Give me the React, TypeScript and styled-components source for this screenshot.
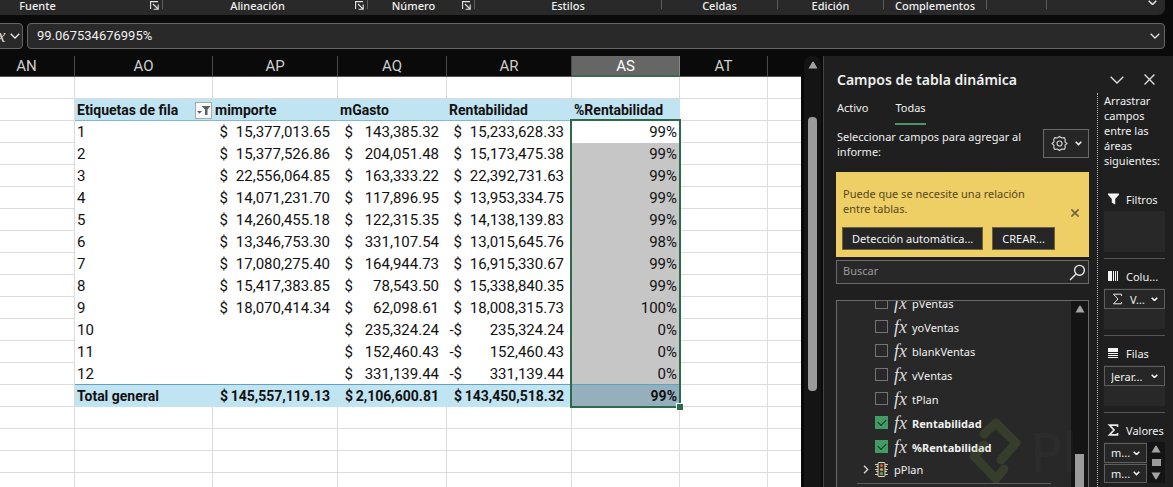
import React from 'react';
import styled, { createGlobalStyle, css } from 'styled-components';

const UI = '"Noto Sans", "Open Sans", sans-serif';
const SHEET = 'Roboto, "Liberation Sans", sans-serif';

const Global = createGlobalStyle`
  * { box-sizing: border-box; }
  body {
    margin: 0;
    background: #0a0a0a;
    color: #f0f0f0;
    font: 11px/15px ${UI};
    overflow: hidden;
  }
  button, input, select { font: inherit; color: inherit; margin: 0; }
  svg { display: block; flex: none; }
`;

const Window = styled.div`
  display: flex;
  flex-direction: column;
  height: 100vh;
`;

/* Ribbon */
const Ribbon = styled.header`
  display: flex;
  height: 15px;
  margin-right: 8px;
  padding-right: 8px;
  background: #292929;
  border-radius: 0 0 7px 0;
  overflow: hidden;
`;
const Group = styled.section<{ $width: number; $clipped?: boolean }>`
  display: flex;
  flex: none;
  width: ${p => p.$width}px;
  height: 9px;
  margin-left: ${p => (p.$clipped ? -72 : 0)}px;
  border-right: 1px solid #5c5c5c;
`;
const GroupName = styled.span`
  flex: 1;
  line-height: 11px;
  text-align: center;
  font-weight: 500;
`;
const IconButton = styled.button`
  display: flex;
  align-items: center;
  justify-content: center;
  padding: 0;
  border: 0;
  background: none;
  color: #e0e0e0;
`;
const Launcher = styled(IconButton)`
  width: 15px;
  height: 10px;
`;
const RibbonToggle = styled(IconButton)`
  margin-left: auto;
  height: 5px;
`;

/* Formula bar */
const FormulaBar = styled.div`
  display: flex;
  gap: 4px;
  margin: 8px 8px 7px 0;
`;
const FxButton = styled.button`
  display: flex;
  align-items: center;
  justify-content: flex-end;
  gap: 3px;
  width: 37px;
  height: 26px;
  margin-left: -14px;
  padding: 0 2px 0 0;
  border: 1px solid #666;
  border-radius: 4px;
  background: #292929;
`;
const FormulaBox = styled.div`
  display: flex;
  flex: 1;
  align-items: center;
  height: 26px;
  padding-right: 4px;
  border: 1px solid #666;
  border-radius: 4px;
  background: #292929;
`;
const FormulaInput = styled.input`
  flex: 1;
  min-width: 0;
  padding: 0 0 0 9px;
  border: 0;
  outline: 0;
  background: none;
  font: 13px/22px ${SHEET};
`;
const Fx = styled.i`
  width: 16px;
  font: italic 18px/20px "Liberation Serif", serif;
  color: #dcdcdc;
`;

/* Work area */
const Work = styled.main`
  display: flex;
  flex: 1;
  min-height: 0;
`;
const Sheet = styled.div`
  flex: 1;
  min-width: 0;
  overflow: hidden;
`;
const Grid = styled.table`
  width: 100%;
  table-layout: fixed;
  border-collapse: separate;
  border-spacing: 0;
  font: 15px/20px ${SHEET};
  color: #111;
  background: #fff;
`;
const Col = styled.col<{ $width?: number }>`
  width: ${p => (p.$width ? p.$width + 'px' : 'auto')};
`;
const Letter = styled.th<{ $active?: boolean }>`
  height: 21px;
  padding: ${p => (p.$active ? '1px 0 0' : '0')};
  font-weight: 400;
  font-size: 15px;
  line-height: 18px;
  color: ${p => (p.$active ? '#fff' : '#cfcfcf')};
  background: ${p => (p.$active ? '#666' : '#0a0a0a')};
  border-right: 1px solid ${p => (p.$active ? '#888' : '#4a4a4a')};
  border-bottom: ${p => (p.$active ? '2px solid #3d6b50' : '1px solid #555')};
  &:first-child { padding-right: 21px; }
  &:last-child { border-right: 0; }
`;
type Tone = 'plain' | 'head' | 'body' | 'total';
const Cell = styled.td<{ $tone?: Tone; $picked?: boolean; $align?: string }>`
  position: relative;
  height: 22px;
  padding: 1px 2px 0;
  white-space: nowrap;
  text-align: ${p => p.$align || 'left'};
  border-right: 1px solid #dcdcdc;
  border-bottom: 1px solid #dcdcdc;
  &:last-child { border-right: 0; }
  ${p => p.$tone === 'body' && css`
    border-color: ${p.$picked ? '#c6c6c6' : '#fff'};
    background: ${p.$picked ? '#c6c6c6' : '#fff'};
  `}
  ${p => p.$tone === 'head' && css`
    border-right-color: #c1e4f2;
    border-bottom-color: #7dbad3;
    background: #c1e4f2;
    font-size: 14px;
    font-weight: 700;
  `}
  ${p => p.$tone === 'total' && css`
    border-color: ${p.$picked ? '#95afbc' : '#c1e4f2'};
    background: ${p.$picked ? '#95afbc' : '#c1e4f2'};
    box-shadow: 0 -1px 0 #5fa3bf;
    font-size: 14px;
    font-weight: 700;
  `}
`;
const Money = styled.span`
  display: flex;
  justify-content: space-between;
  margin: 0 5px 0 -2px;
`;
const Sign = styled.span`
  width: 15px;
  text-align: right;
`;
const HeadRow = styled.span`
  display: flex;
  align-items: center;
  justify-content: space-between;
`;
const FilterButton = styled.button`
  display: flex;
  align-items: center;
  justify-content: center;
  width: 17px;
  height: 17px;
  margin-right: -2px;
  padding: 0;
  border: 1px solid #a3a9ad;
  background: #fafafa;
`;
const Selection = styled.span`
  position: absolute;
  z-index: 2;
  top: -2px;
  left: -2px;
  right: -2px;
  height: 289px;
  border: 2px solid #2c6b49;
  pointer-events: none;
  &::after {
    content: '';
    position: absolute;
    right: -4px;
    bottom: -4px;
    width: 6px;
    height: 6px;
    background: #2c6b49;
    border: solid #fff;
    border-width: 1px 0 0 1px;
  }
`;
const SheetScroll = styled.div`
  display: flex;
  flex-direction: column;
  align-items: center;
  width: 17px;
  margin: 0 2px 0 3px;
  padding-top: 5px;
  border-radius: 8px 8px 0 0;
  background: #141414;
`;
const Thumb = styled.div<{ $height: number; $gap: number }>`
  width: 9px;
  height: ${p => p.$height}px;
  margin-top: ${p => p.$gap}px;
  border-radius: 4px;
  background: #9b9b9b;
`;

/* Field pane */
const Pane = styled.aside`
  position: relative;
  display: flex;
  flex-direction: column;
  flex: none;
  width: 350px;
  padding: 0 8px 0 12px;
  overflow: hidden;
  border-left: 1px solid #444;
  background: #1f1f1f;
`;
const PaneHeader = styled.div`
  display: flex;
  align-items: center;
  height: 37px;
  padding: 10px 10px 0 1px;
  gap: 20px;
`;
const PaneTitle = styled.h2`
  flex: 1;
  margin: 0;
  font-size: 14px;
  line-height: 20px;
  font-weight: 600;
`;
const PaneBody = styled.div`
  display: flex;
  flex: 1;
  min-height: 0;
`;
const Fields = styled.div`
  display: flex;
  flex: 1;
  flex-direction: column;
  min-width: 0;
  margin-right: 8px;
`;
const Tabs = styled.div`
  display: flex;
  gap: 27px;
  height: 33px;
  padding-left: 1px;
`;
const Tab = styled.button<{ $active?: boolean }>`
  height: 32px;
  padding: 0 0 1px;
  border: 0;
  border-bottom: 2px solid ${p => (p.$active ? '#4c9469' : 'transparent')};
  background: none;
  line-height: 15px;
`;
const Choose = styled.div`
  display: flex;
  align-items: flex-start;
  justify-content: space-between;
  height: 46px;
  padding-left: 1px;
`;
const Hint = styled.p`
  margin: 3px 0 0;
`;
const GearButton = styled.button`
  display: flex;
  align-items: center;
  justify-content: center;
  gap: 7px;
  width: 46px;
  height: 29px;
  margin-top: 3px;
  padding: 0;
  border: 1px solid #6a6a6a;
  background: #262626;
`;
const Notice = styled.div`
  display: grid;
  grid-template-columns: 1fr 16px;
  align-items: end;
  align-content: end;
  height: 85px;
  padding: 0 6px 7px;
  background: #edcf66;
  color: #57481c;
`;
const NoticeText = styled.p`
  margin: 0 0 11px 1px;
  max-width: 200px;
`;
const NoticeClose = styled(IconButton)`
  height: 12px;
  margin-bottom: 8px;
  color: #6f6240;
`;
const NoticeActions = styled.div`
  display: flex;
  grid-column: 1 / 3;
  gap: 9px;
`;
const NoticeButton = styled.button`
  height: 23px;
  padding: 0 9px;
  border: 1px solid #6b6040;
  background: #262626;
  color: #f4f4f4;
`;
const Search = styled.label`
  display: flex;
  align-items: center;
  height: 24px;
  margin-top: 3px;
  padding-right: 2px;
  border: 1px solid #6a6a6a;
  background: #282828;
`;
const SearchInput = styled.input`
  flex: 1;
  min-width: 0;
  padding: 0 0 3px 6px;
  border: 0;
  outline: 0;
  background: none;
  &::placeholder { color: #9a9a9a; opacity: 1; }
`;
const FieldBox = styled.div`
  display: flex;
  flex: 1;
  min-height: 0;
  margin-top: 16px;
  border: 1px solid #6a6a6a;
  border-bottom: 0;
  background: #282828;
  overflow: hidden;
`;
const FieldList = styled.ul`
  flex: 1;
  margin: -10px 0 0;
  padding: 0 20px 0 0;
  list-style: none;
`;
const FieldItem = styled.li``;
const FieldLabel = styled.label<{ $bold?: boolean }>`
  display: flex;
  align-items: center;
  height: 24px;
  padding-left: 38px;
  font-weight: ${p => (p.$bold ? 700 : 400)};
`;
const Check = styled.input`
  appearance: none;
  position: relative;
  width: 13px;
  height: 13px;
  margin: 0 6px 1px 0;
  border: 1px solid #757575;
  &:checked { background: #429a64; border-color: #429a64; }
  &:checked::after {
    content: '';
    position: absolute;
    left: 2px;
    top: 2px;
    width: 7px;
    height: 4px;
    border: solid #14301f;
    border-width: 0 0 1px 1px;
    transform: rotate(-45deg);
  }
`;
const FieldName = styled.span`
  margin-left: 2px;
`;
const TableRow = styled.li`
  display: flex;
  align-items: center;
  gap: 6px;
  height: 25px;
  margin-left: 20px;
  padding: 0 0 4px 6px;
  border-bottom: 1px solid #5e5e5e;
`;
const FieldScroll = styled.div`
  display: flex;
  flex-direction: column;
  align-items: center;
  width: 17px;
  padding-top: 4px;
  background: #141414;
`;
const FieldThumb = styled.div`
  flex: 1;
  width: 9px;
  margin-top: 141px;
  background: #9b9b9b;
`;

/* Areas */
const Areas = styled.div`
  flex: none;
  width: 68px;
  padding-left: 6px;
  border-left: 1px dotted #b5b5b5;
`;
const AreasHint = styled.p`
  height: 89px;
  margin: 0;
`;
const Area = styled.section`
  height: 77px;
  border-bottom: 1px solid #555;
  &:last-child { border-bottom: 0; }
`;
const AreaHead = styled.h3`
  display: flex;
  align-items: center;
  gap: 6px;
  height: 29px;
  margin: 0;
  padding: 5px 0 0 3px;
  font-size: 11px;
  font-weight: 400;
  white-space: nowrap;
`;
const AreaDrop = styled.div`
  display: flex;
  width: 61px;
  height: 41px;
  background: #282828;
`;
const Chips = styled.div`
  display: flex;
  flex: 1;
  flex-direction: column;
  gap: 1px;
  margin-top: 1px;
`;
const Chip = styled.label`
  display: flex;
  align-items: center;
  justify-content: space-between;
  height: 20px;
  padding: 0 6px;
  border: 1px solid #5e5e5e;
  background: #262626;
`;
const ChipSelect = styled.select`
  appearance: none;
  min-width: 0;
  padding: 0;
  border: 0;
  outline: 0;
  background: none;
`;
const AreaScroll = styled.div`
  display: flex;
  flex-direction: column;
  align-items: center;
  justify-content: space-around;
  width: 18px;
  background: #141414;
`;
const AreaThumb = styled.div`
  width: 9px;
  height: 7px;
  background: #9b9b9b;
`;

const Watermark = styled.div`
  position: absolute;
  left: 144px;
  bottom: 0;
  display: flex;
  align-items: center;
  gap: 8px;
  color: rgba(255, 255, 255, 0.02);
  font: 500 54px/72px ${UI};
  pointer-events: none;
`;

const Chevron = ({ w = 10, s = 1.3 }: { w?: number; s?: number }) => (
  <svg width={w} height={w / 2 + 1} viewBox={`0 0 ${w} ${w / 2 + 1}`} fill="none" stroke="currentColor" strokeWidth={s}>
    <path d={`M.7 .7L${w / 2} ${w / 2}L${w - 0.7} .7`} />
  </svg>
);
const Cross = ({ w = 10, s = 1.2 }: { w?: number; s?: number }) => (
  <svg width={w} height={w} viewBox="0 0 10 10" fill="none" stroke="currentColor" strokeWidth={s}>
    <path d="M.5 .5L9.5 9.5M9.5 .5L.5 9.5" />
  </svg>
);
const Triangle = ({ down }: { down?: boolean }) => (
  <svg width="10" height="8" viewBox="0 0 10 8" fill="#a3a3a3">
    <path d={down ? 'M.5 .5h9L5.6 7.3h-1.2z' : 'M.5 7.5h9L5.6 .7h-1.2z'} />
  </svg>
);
const LauncherIcon = () => (
  <svg width="9" height="9" viewBox="0 0 9 9" fill="none" stroke="#e4e4e4" strokeWidth="1.1">
    <path d="M.6 8V.6H8M3 3l5 5M8.2 3.6v4.7H3.6" />
  </svg>
);
const Gear = () => (
  <svg width="17" height="17" viewBox="0 0 17 17" fill="none" stroke="#cfcfcf" strokeWidth="1.2" strokeLinejoin="round">
    <path d="M1 8.500L3 6.900L2.800 4.300L3.800 2.600L6.300 3L8.500 1.400L10.700 3L13.200 2.600L14.200 4.300L14 6.900L16 8.500L14 10.100L14.200 12.700L13.200 14.400L10.700 14L8.500 15.600L6.300 14L3.800 14.400L2.800 12.700L3 10.100Z" />
    <circle cx="8.500" cy="8.500" r="2.500" />
  </svg>
);
const Magnifier = () => (
  <svg width="17" height="17" viewBox="0 0 17 17" fill="none" stroke="#e8e8e8" strokeWidth="1.4">
    <circle cx="10.500" cy="6.300" r="4.900" />
    <path d="M7 10L1 16" />
  </svg>
);
const Funnel = () => (
  <svg width="13" height="12" viewBox="0 0 13 12" fill="#f4f4f4">
    <path d="M1 .5h11v1.300L8.200 6v5.500L4.800 9.800V6L1 1.800z" />
  </svg>
);
const ColumnsIcon = () => (
  <svg width="13" height="10" viewBox="0 0 13 10" fill="#f4f4f4">
    <path d="M1 0h4v10H1zM6 0h1v10H6zM8 0h1v10H8zM10 0h1v10h-1z" />
  </svg>
);
const RowsIcon = () => (
  <svg width="13" height="10" viewBox="0 0 13 10" fill="#f4f4f4">
    <path d="M1 0h10v4H1zM1 5h10v1H1zM1 7h10v1H1zM1 9h10v1H1z" />
  </svg>
);
const Sigma = ({ thin }: { thin?: boolean }) => (
  <svg width="13" height="12" viewBox="0 0 13 12" fill="none" stroke="#e8e8e8" strokeWidth={thin ? 1 : 1.7}>
    <path d="M10.500 3V1.200H2.500L7 6L2.500 10.800H10.500V9" />
  </svg>
);
const SheetFilterIcon = () => (
  <svg width="14" height="13" viewBox="0 0 14 13" fill="#5a5f63">
    <path d="M4.500 2h9L10.500 5.600V11H8V5.600zM0 7h5L2.500 9.800z" />
  </svg>
);
const TrafficLight = () => (
  <svg width="13" height="15" viewBox="0 0 13 15" fill="none">
    <path d="M0 2.500h13M0 7.500h13M0 12.500h13M1 4.500h11M1 9.500h11" stroke="#d9cfa9" />
    <rect x="3" y=".5" width="7" height="14" rx="1" fill="#34332c" stroke="#e4dcbc" />
    <circle cx="6.500" cy="3.500" r="1.500" fill="#d9543f" />
    <circle cx="6.500" cy="7.500" r="1.500" fill="#d0a25a" />
    <circle cx="6.500" cy="11.500" r="1.500" fill="#5cae7c" />
  </svg>
);
const Expander = () => (
  <svg width="6" height="9" viewBox="0 0 6 9" fill="none" stroke="#d8d8d8" strokeWidth="1.300">
    <path d="M1 .8l3.700 3.700L1 8.200" />
  </svg>
);

const groups = [
  { name: 'Fuente', width: 235, launcher: true },
  { name: 'Alineación', width: 205, launcher: true },
  { name: 'Número', width: 107, launcher: true },
  { name: 'Estilos', width: 187 },
  { name: 'Celdas', width: 116 },
  { name: 'Edición', width: 106 },
  { name: 'Complementos', width: 103 },
  { name: '', width: 60 },
];
const letters = ['AN', 'AO', 'AP', 'AQ', 'AR', 'AS', 'AT', ''];
const widths = [75, 138, 125, 109, 125, 108, 88];
const rows: string[][] = [
  ['1', '15,377,013.65', '143,385.32', '15,233,628.33', '99%'],
  ['2', '15,377,526.86', '204,051.48', '15,173,475.38', '99%'],
  ['3', '22,556,064.85', '163,333.22', '22,392,731.63', '99%'],
  ['4', '14,071,231.70', '117,896.95', '13,953,334.75', '99%'],
  ['5', '14,260,455.18', '122,315.35', '14,138,139.83', '99%'],
  ['6', '13,346,753.30', '331,107.54', '13,015,645.76', '98%'],
  ['7', '17,080,275.40', '164,944.73', '16,915,330.67', '99%'],
  ['8', '15,417,383.85', '78,543.50', '15,338,840.35', '99%'],
  ['9', '18,070,414.34', '62,098.61', '18,008,315.73', '100%'],
  ['10', '', '235,324.24', '-235,324.24', '0%'],
  ['11', '', '152,460.43', '-152,460.43', '0%'],
  ['12', '', '331,139.44', '-331,139.44', '0%'],
];
const total = ['Total general', '145,557,119.13', '2,106,600.81', '143,450,518.32', '99%'];
const fields = ['pVentas', 'yoVentas', 'blankVentas', 'vVentas', 'tPlan', 'Rentabilidad', '%Rentabilidad'];
const checkedFields = ['Rentabilidad', '%Rentabilidad'];

const Amount = ({ value }: { value: string }) =>
  value ? (
    <Money>
      <Sign>{value.startsWith('-') ? '-$' : '$'}</Sign>
      <span>{value.replace('-', '')}</span>
    </Money>
  ) : null;

const DataRow = ({ row, tone, first }: { row: string[]; tone: Tone; first?: boolean }) => (
  <tr>
    <Cell />
    <Cell $tone={tone}>{row[0]}</Cell>
    {row.slice(1, 4).map((v, i) => (
      <Cell key={i} $tone={tone}><Amount value={v} /></Cell>
    ))}
    <Cell $tone={tone} $picked={!first} $align="right">
      {row[4]}
      {first && <Selection />}
    </Cell>
    <Cell />
    <Cell />
  </tr>
);
const BlankRow = () => <tr>{letters.map((_, i) => <Cell key={i} />)}</tr>;

const AreaChip = ({ text, label, icon }: { text: string; label: string; icon?: React.ReactNode }) => (
  <Chip>
    {icon}
    <ChipSelect aria-label={label}><option>{text}</option></ChipSelect>
    <Chevron w={7} s={1.6} />
  </Chip>
);

export default function App() {
  return (
    <Window>
      <Global />
      <Ribbon>
        {groups.map((g, i) => (
          <Group key={i} $width={g.width} $clipped={i === 0}>
            <GroupName>{g.name}</GroupName>
            {g.launcher && <Launcher aria-label={`Configuración de ${g.name}`}><LauncherIcon /></Launcher>}
          </Group>
        ))}
        <RibbonToggle aria-label="Contraer la cinta"><Chevron w={9} s={1.6} /></RibbonToggle>
      </Ribbon>

      <FormulaBar>
        <FxButton aria-label="Insertar función"><Fx>fx</Fx><Chevron /></FxButton>
        <FormulaBox>
          <FormulaInput aria-label="Barra de fórmulas" defaultValue="99.067534676995%" />
          <IconButton aria-label="Expandir"><Chevron /></IconButton>
        </FormulaBox>
      </FormulaBar>

      <Work>
        <Sheet>
          <Grid>
            <colgroup>
              {widths.map((w, i) => <Col key={i} $width={w} />)}
              <Col />
            </colgroup>
            <thead>
              <tr>{letters.map((l, i) => <Letter key={i} $active={l === 'AS'}>{l}</Letter>)}</tr>
            </thead>
            <tbody>
              <BlankRow />
              <tr>
                <Cell />
                <Cell $tone="head">
                  <HeadRow>
                    Etiquetas de fila
                    <FilterButton aria-label="Filtrar"><SheetFilterIcon /></FilterButton>
                  </HeadRow>
                </Cell>
                {['mimporte', 'mGasto', 'Rentabilidad', '%Rentabilidad'].map(h => (
                  <Cell key={h} $tone="head">{h}</Cell>
                ))}
                <Cell />
                <Cell />
              </tr>
              {rows.map((r, i) => <DataRow key={r[0]} row={r} tone="body" first={i === 0} />)}
              <DataRow row={total} tone="total" />
              <BlankRow />
              <BlankRow />
              <BlankRow />
              <BlankRow />
            </tbody>
          </Grid>
        </Sheet>
        <SheetScroll>
          <Triangle />
          <Thumb $height={274} $gap={48} />
        </SheetScroll>

        <Pane>
          <PaneHeader>
            <PaneTitle>Campos de tabla dinámica</PaneTitle>
            <IconButton aria-label="Opciones del panel"><Chevron w={14} /></IconButton>
            <IconButton aria-label="Cerrar"><Cross w={11} /></IconButton>
          </PaneHeader>
          <PaneBody>
            <Fields>
              <Tabs>
                <Tab>Activo</Tab>
                <Tab $active>Todas</Tab>
              </Tabs>
              <Choose>
                <Hint>Seleccionar campos para agregar al<br />informe:</Hint>
                <GearButton aria-label="Herramientas"><Gear /><Chevron w={7} s={1.6} /></GearButton>
              </Choose>
              <Notice>
                <NoticeText>Puede que se necesite una relación entre tablas.</NoticeText>
                <NoticeClose aria-label="Descartar"><Cross w={8} s={2} /></NoticeClose>
                <NoticeActions>
                  <NoticeButton>Detección automática...</NoticeButton>
                  <NoticeButton>CREAR...</NoticeButton>
                </NoticeActions>
              </Notice>
              <Search>
                <SearchInput aria-label="Buscar" placeholder="Buscar" />
                <Magnifier />
              </Search>
              <FieldBox>
                <FieldList>
                  {fields.map(f => (
                    <FieldItem key={f}>
                      <FieldLabel $bold={checkedFields.includes(f)}>
                        <Check type="checkbox" defaultChecked={checkedFields.includes(f)} />
                        <Fx>fx</Fx>
                        <FieldName>{f}</FieldName>
                      </FieldLabel>
                    </FieldItem>
                  ))}
                  <TableRow><Expander /><TrafficLight />pPlan</TableRow>
                </FieldList>
                <FieldScroll>
                  <Triangle />
                  <FieldThumb />
                </FieldScroll>
              </FieldBox>
            </Fields>
            <Areas>
              <AreasHint>Arrastrar campos entre las áreas siguientes:</AreasHint>
              <Area>
                <AreaHead><Funnel />Filtros</AreaHead>
                <AreaDrop />
              </Area>
              <Area>
                <AreaHead><ColumnsIcon />Colu...</AreaHead>
                <AreaDrop>
                  <Chips><AreaChip label="Columnas" text="V..." icon={<Sigma thin />} /></Chips>
                </AreaDrop>
              </Area>
              <Area>
                <AreaHead><RowsIcon />Filas</AreaHead>
                <AreaDrop>
                  <Chips><AreaChip label="Filas" text="Jerar..." /></Chips>
                </AreaDrop>
              </Area>
              <Area>
                <AreaHead><Sigma />Valores</AreaHead>
                <AreaDrop>
                  <Chips>
                    <AreaChip label="Valor 1" text="m..." />
                    <AreaChip label="Valor 2" text="m..." />
                  </Chips>
                  <AreaScroll>
                    <Triangle />
                    <AreaThumb />
                    <Triangle down />
                  </AreaScroll>
                </AreaDrop>
              </Area>
            </Areas>
          </PaneBody>
          <Watermark aria-hidden="true">
            <svg width="54" height="72" viewBox="0 0 54 72" fill="none" stroke="#7fa83a" strokeOpacity=".17" strokeWidth="9" strokeLinejoin="round" strokeLinecap="round">
              <path d="M16 19L28 8L48 28L33 45M36 54L28 64L6 41L16 30" />
            </svg>
            Pl
          </Watermark>
        </Pane>
      </Work>
    </Window>
  );
}
